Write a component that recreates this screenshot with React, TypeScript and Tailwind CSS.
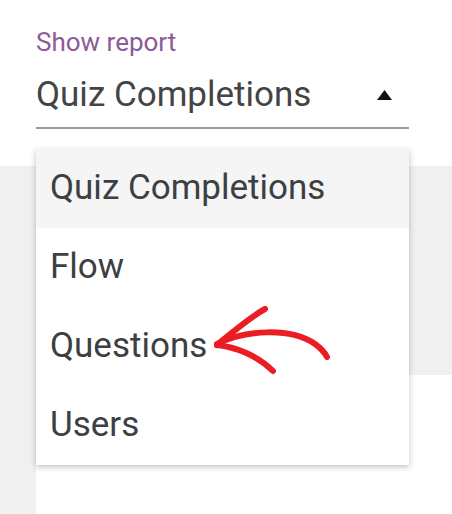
const items = ['Quiz Completions', 'Flow', 'Questions', 'Users']

const RedArrow = () => (
  <svg className="absolute left-[205px] top-[300px]" width="140" height="90" viewBox="0 0 140 90" fill="none">
    <g stroke="#ec1c24" strokeWidth="6" strokeLinecap="round" strokeLinejoin="round">
      <path d="M12 45 C 30 30, 45 17, 60 9" />
      <path d="M12 45 C 30 47, 52 55, 68 71" />
      <path d="M12 44 C 40 30, 85 27, 110 44 C 117 49, 120 53, 122 57" />
    </g>
  </svg>
)

export default function App() {
  return (
    <div className="relative h-[514px] w-[452px] overflow-hidden bg-white font-['Roboto',sans-serif]">
      <div className="h-[166px] pl-[36px] pr-[43px] pt-[27px]">
        <div className="text-[26px] leading-[30px] text-[#8d5b96]">Show report</div>
        <div className="flex items-center justify-between border-b-2 border-[#9a9a9a] pt-[18px] pb-[12px]">
          <span className="text-[35px] leading-[40px] text-[#444]">Quiz Completions</span>
          <svg className="mr-[17px]" width="15" height="10" viewBox="0 0 15 10">
            <path d="M7.5 0 L15 10 L0 10 Z" fill="#111" />
          </svg>
        </div>
      </div>
      <div className="flex h-[348px] flex-col bg-[#f0f0f0] pl-[36px] pt-[209px]">
        <div className="flex-1 bg-white" />
      </div>

      <ul className="absolute left-[36px] top-[149px] w-[373px] bg-white shadow-[0_2px_6px_rgba(0,0,0,0.25)]">
        {items.map((item, i) => (
          <li
            key={item}
            className={`flex h-[79px] items-center pl-[14px] text-[35px] text-[#3c4043] ${i === 0 ? 'bg-[#f5f5f5]' : ''}`}
          >
            {item}
          </li>
        ))}
      </ul>
      <RedArrow />
    </div>
  )
}
